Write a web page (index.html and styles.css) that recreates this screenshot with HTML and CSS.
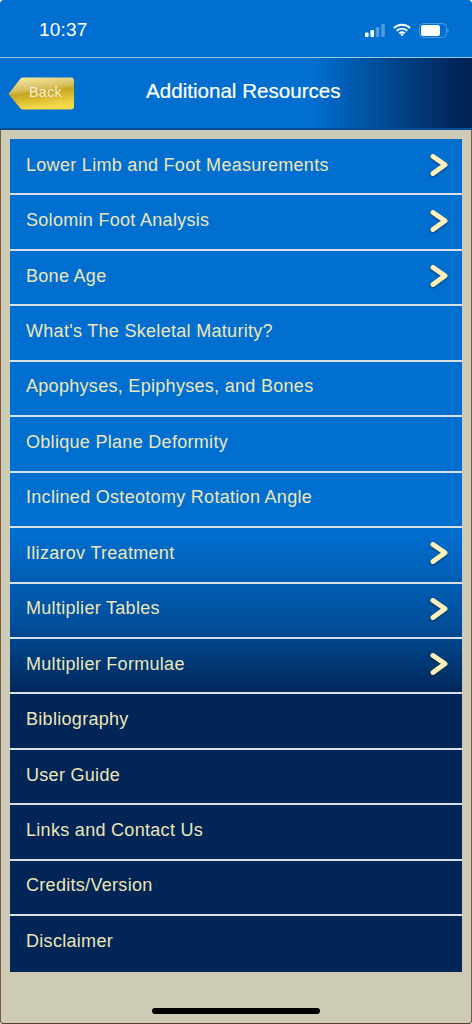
FILE: index.html
```html
<!DOCTYPE html>
<html lang="en">
<head>
  <meta charset="UTF-8" />
  <meta name="viewport" content="width=device-width, initial-scale=1.0"/>
  <title>Additional Resources</title>
  <link rel="stylesheet" href="styles.css">
</head>
<body>

  <div class="status-bar">
    <span class="time">10:37</span>
    <div class="status-icons">
      <svg class="signal" width="20" height="13" viewBox="0 0 20 13">
        <rect x="0" y="8.5" width="3.6" height="4.5" rx="1" fill="#fff"/>
        <rect x="5.4" y="6" width="3.6" height="7" rx="1" fill="#fff"/>
        <rect x="10.8" y="3" width="3.6" height="10" rx="1" fill="#4f9be0"/>
        <rect x="16.2" y="0" width="3.6" height="13" rx="1" fill="#4f9be0"/>
      </svg>
      <svg class="wifi" width="18" height="14" viewBox="0 0 19 14">
        <path d="M1 5a12 12 0 0 1 17 0M3.8 7.9a8 8 0 0 1 11.4 0M6.6 10.6a4 4 0 0 1 5.8 0" fill="none" stroke="#fff" stroke-width="2"/>
        <path d="M7.9 12l1.6-1.6 1.6 1.6-1.6 1.7z" fill="#fff"/>
      </svg>
      <svg class="battery" width="30" height="15" viewBox="0 0 30 15">
        <rect x="0.5" y="0.5" width="27" height="14" rx="4" fill="none" stroke="#4f9be0"/>
        <rect x="2" y="2" width="19" height="11" rx="2.5" fill="#fff"/>
        <path d="M28.4 5.5c.9 .3 1.4 1 1.4 2s-.5 1.7-1.4 2z" fill="#4f9be0"/>
      </svg>
    </div>
  </div>

  <div class="nav-bar">
    <a class="back-button">
      <svg class="back-shape" width="67" height="33" viewBox="0 0 67 33">
        <defs>
          <linearGradient id="backGold" x1="0" y1="0" x2="0.25" y2="1">
            <stop offset="0" stop-color="#f8eeaa"/>
            <stop offset="0.42" stop-color="#d8c060"/>
            <stop offset="0.55" stop-color="#c9a51f"/>
            <stop offset="1" stop-color="#f4d94a"/>
          </linearGradient>
        </defs>
        <path d="M0.5 17L12.5 1.5Q13.2 0.5 15 0.5H63Q66 0.5 66 3.5V29.5Q66 32.5 63 32.5H15Q13.2 32.5 12.5 31.5Z" fill="url(#backGold)"/>
      </svg>
      <span class="back-label">Back</span>
    </a>
    <h1>Additional Resources</h1>
  </div>

  <div class="content">
    <ul class="menu">
      <li>Lower Limb and Foot Measurements<svg class="chevron" viewBox="0 0 20 24"><path d="M4 3.5L16 11.8L4 20.5"/></svg></li>
      <li>Solomin Foot Analysis<svg class="chevron" viewBox="0 0 20 24"><path d="M4 3.5L16 11.8L4 20.5"/></svg></li>
      <li>Bone Age<svg class="chevron" viewBox="0 0 20 24"><path d="M4 3.5L16 11.8L4 20.5"/></svg></li>
      <li>What's The Skeletal Maturity?</li>
      <li>Apophyses, Epiphyses, and Bones</li>
      <li>Oblique Plane Deformity</li>
      <li>Inclined Osteotomy Rotation Angle</li>
      <li>Ilizarov Treatment<svg class="chevron" viewBox="0 0 20 24"><path d="M4 3.5L16 11.8L4 20.5"/></svg></li>
      <li>Multiplier Tables<svg class="chevron" viewBox="0 0 20 24"><path d="M4 3.5L16 11.8L4 20.5"/></svg></li>
      <li>Multiplier Formulae<svg class="chevron" viewBox="0 0 20 24"><path d="M4 3.5L16 11.8L4 20.5"/></svg></li>
      <li>Bibliography</li>
      <li>User Guide</li>
      <li>Links and Contact Us</li>
      <li>Credits/Version</li>
      <li>Disclaimer</li>
    </ul>
    <div class="home-indicator"></div>
  </div>

</body>
</html>
```

FILE: styles.css
```css
html, body {
  margin: 0;
  padding: 0;
}

body {
  width: 472px;
  height: 1024px;
  overflow: hidden;
  background: #fff;
  font-family: 'Liberation Sans', Arial, sans-serif;
}

.status-bar {
  height: 58px;
  box-sizing: border-box;
  padding: 3px 23px 0 39px;
  display: flex;
  align-items: center;
  justify-content: space-between;
  background: #016fd0;
  border-bottom: 1px solid #9fc8d8;
  border-radius: 4px 4px 0 0;
  color: #fff;
}

.time {
  font-size: 19px;
  letter-spacing: 0.2px;
}

.status-icons {
  display: flex;
  align-items: center;
  gap: 8px;
}

.nav-bar {
  height: 72px;
  box-sizing: border-box;
  display: flex;
  align-items: center;
  padding-left: 8px;
  background: linear-gradient(to right, #016fd0 0%, #016fd0 66%, #012355 98%);
  border-bottom: 2px solid #014f96;
}

.back-button {
  position: relative;
  width: 67px;
  height: 33px;
  flex: none;
  margin-top: 1px;
}

.back-shape {
  display: block;
}

.back-label {
  position: absolute;
  top: 7px;
  left: 21px;
  font-size: 14.5px;
  letter-spacing: 0.2px;
  color: #f0ecd8;
}

h1 {
  margin: 0 0 5px 71px;
  font-size: 20.6px;
  font-weight: normal;
  color: #fff;
  -webkit-text-stroke: 0.2px #fff;
  white-space: nowrap;
}

.content {
  height: 894px;
  box-sizing: border-box;
  padding: 9px 10px 0;
  background: #cdcbb6;
  border-left: 1px solid #7a5a3a;
  border-right: 1px solid #7a5a3a;
  border-bottom: 1px solid #5a4028;
  border-radius: 0 0 3px 3px;
  position: relative;
}

.menu {
  list-style: none;
  margin: 0 -1px;
  padding: 1px 0 0;
  height: 833px;
  box-sizing: border-box;
  display: grid;
  grid-auto-rows: 55.45px;
  background: linear-gradient(to bottom, #016fd0 0%, #016fd0 47%, #014f9c 58%, #002556 67%, #002556 100%);
}

.menu li {
  display: flex;
  align-items: center;
  justify-content: space-between;
  box-sizing: border-box;
  padding: 0 13px 3px 16px;
  font-size: 18px;
  letter-spacing: 0.3px;
  color: #ece6b8;
  border-bottom: 2px solid #d8e0e8;
}

.menu li:last-child {
  border-bottom-color: transparent;
}

.chevron {
  width: 20px;
  height: 24px;
  flex: none;
  fill: none;
  stroke: #fdf0b8;
  stroke-width: 5;
  stroke-linecap: round;
  stroke-linejoin: round;
  filter: drop-shadow(0 1px 1px rgba(0, 0, 0, 0.45));
}

.home-indicator {
  position: absolute;
  left: 151px;
  bottom: 9px;
  width: 168px;
  height: 6px;
  border-radius: 3px;
  background: #000;
}
```
